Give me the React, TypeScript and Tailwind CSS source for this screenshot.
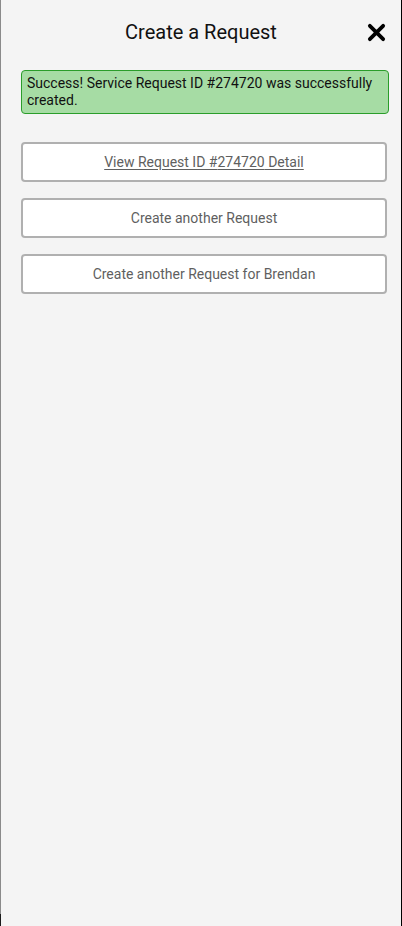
import { useState } from 'react'

const REQUEST_ID = '274720'

export default function App() {
  const [open] = useState(true)

  return (
    <div className="flex h-[926px] w-[402px] bg-[#1a1a1a] font-['Roboto',sans-serif]">
      {/* left sliver of the page behind the sheet */}
      <div className="h-[914px] w-px shrink-0 bg-[#8a8a8a]" />

      {open && (
        <div className="flex w-[400px] shrink-0 flex-col bg-[#f4f4f4]">
          {/* Header */}
          <div className="relative flex h-[64px] items-center justify-center">
            <h1 className="text-[20px] leading-none text-[#111]">Create a Request</h1>
            <button className="absolute right-[15px] top-[22px] flex h-5 w-5 items-center justify-center">
              <svg viewBox="0 0 20 20" className="h-[19px] w-[19px]">
                <path d="M3 3 L17 17 M17 3 L3 17" stroke="#000" strokeWidth="4" strokeLinecap="round" />
              </svg>
            </button>
          </div>

          <div className="flex flex-col px-5 pt-[6px]">
            {/* Success alert */}
            <div className="w-[368px] rounded-[4px] border border-[#2a9d2a] bg-[#a6dca4] px-[5px] py-[4px] text-[14px] leading-[17px] text-[#111]">
              Success! Service Request ID #{REQUEST_ID} was successfully created.
            </div>

            {/* Actions */}
            <div className="mt-7 flex w-[366px] flex-col gap-4">
              <button className="h-10 rounded-[4px] border-2 border-[#b0b0b0] bg-white text-[14px] text-[#5f5f5f] underline underline-offset-2">
                View Request ID #{REQUEST_ID} Detail
              </button>
              <button className="h-10 rounded-[4px] border-2 border-[#b0b0b0] bg-white text-[14px] text-[#5f5f5f]">
                Create another Request
              </button>
              <button className="h-10 rounded-[4px] border-2 border-[#b0b0b0] bg-white text-[14px] text-[#5f5f5f]">
                Create another Request for Brendan
              </button>
            </div>
          </div>
        </div>
      )}

      <div className="w-px shrink-0 bg-black" />
    </div>
  )
}
